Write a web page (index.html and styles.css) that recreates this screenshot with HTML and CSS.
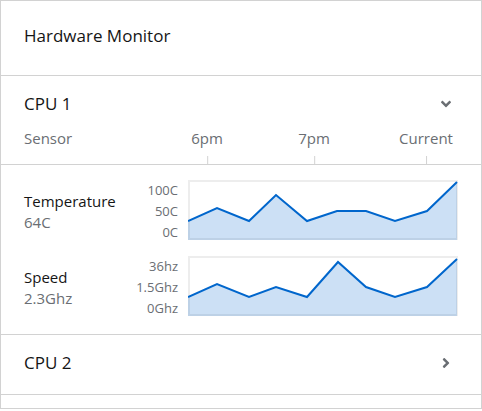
FILE: index.html
```html
<!DOCTYPE html>
<html lang="en">
<head>
<meta charset="utf-8">
<title>Hardware Monitor</title>
<link rel="stylesheet" href="styles.css">
</head>
<body>
<div class="card">
  <div class="card-title">Hardware Monitor</div>
  <ul class="cpu-list">
    <li class="cpu">
      <div class="cpu-head">
        <span class="cpu-name">CPU 1</span>
        <span class="toggle">
          <svg width="10" height="16" viewBox="0 0 320 512"><path d="M143 352.3L7 216.3c-9.4-9.4-9.4-24.6 0-33.9l22.6-22.6c9.4-9.4 24.6-9.4 33.9 0l96.4 96.4 96.4-96.4c9.4-9.4 24.6-9.4 33.9 0l22.6 22.6c9.4 9.4 9.4 24.6 0 33.9l-136 136c-9.4 9.5-24.6 9.5-34 .1z"/></svg>
        </span>
      </div>
      <div class="axis-head">
        <span class="col-label">Sensor</span>
        <div class="time-axis">
          <span class="time" style="left:19px">6pm</span>
          <span class="time" style="left:126px">7pm</span>
          <span class="time" style="left:238px">Current</span>
        </div>
      </div>
      <div class="cpu-body">
        <div class="sensor-row">
          <div class="sensor">
            <div class="sensor-name">Temperature</div>
            <div class="sensor-value">64C</div>
          </div>
          <div class="y-axis"><span>100C</span><span>50C</span><span>0C</span></div>
          <svg class="spark" width="270" height="60" viewBox="0 0 270 60">
            <rect class="frame" x="1" y="1" width="268" height="58"/>
            <path class="area" d="M0,41 L29,28 61,41 88,15 119,41 149,31 178,31 207,41 239,31 269,2 L269,60 L0,60Z"/>
            <polyline class="line" points="0,41 29,28 61,41 88,15 119,41 149,31 178,31 207,41 239,31 269,2"/>
          </svg>
        </div>
        <div class="sensor-row">
          <div class="sensor">
            <div class="sensor-name">Speed</div>
            <div class="sensor-value">2.3Ghz</div>
          </div>
          <div class="y-axis"><span>36hz</span><span>1.5Ghz</span><span>0Ghz</span></div>
          <svg class="spark" width="270" height="60" viewBox="0 0 270 60">
            <rect class="frame" x="1" y="1" width="268" height="58"/>
            <path class="area" d="M0,41 L29,28 61,41 88,31 119,41 150,6 178,31 207,41 239,31 269,3 L269,60 L0,60Z"/>
            <polyline class="line" points="0,41 29,28 61,41 88,31 119,41 150,6 178,31 207,41 239,31 269,3"/>
          </svg>
        </div>
      </div>
    </li>
    <li class="cpu">
      <div class="cpu-head collapsed">
        <span class="cpu-name">CPU 2</span>
        <span class="toggle">
          <svg width="8" height="16" viewBox="0 0 256 512"><path d="M224.3 273l-136 136c-9.4 9.4-24.6 9.4-33.9 0l-22.6-22.6c-9.4-9.4-9.4-24.6 0-33.9l96.4-96.4-96.4-96.4c-9.4-9.4-9.4-24.6 0-33.9L54.3 103c9.4-9.4 24.6-9.4 33.9 0l136 136c9.5 9.4 9.5 24.6.1 34z"/></svg>
        </span>
      </div>
    </li>
  </ul>
</div>
</body>
</html>
```

FILE: styles.css
```css
* { box-sizing: border-box; }

body {
  margin: 0;
  background: #fff;
  font-family: "Open Sans", "Noto Sans", sans-serif;
  color: #151515;
}

.card {
  width: 482px;
  border: 1px solid #d2d2d2;
  padding-bottom: 13px;
  background: #fff;
}

.card-title {
  padding: 22px 23px 26px;
  font-size: 17px;
  line-height: 26px;
  border-bottom: 1px solid #d2d2d2;
}

.cpu-list {
  list-style: none;
  margin: 0;
  padding: 0;
}

.cpu {
  border-bottom: 1px solid #d2d2d2;
}

.cpu-head {
  display: flex;
  align-items: center;
  justify-content: space-between;
  padding: 16px 23px 0;
}

.cpu-head.collapsed {
  padding-bottom: 19px;
}

.cpu-name {
  font-size: 17px;
  line-height: 24px;
}

.toggle {
  width: 24px;
  height: 24px;
  display: flex;
  align-items: center;
  justify-content: center;
}

.toggle svg {
  fill: #6a6e73;
}

.axis-head {
  display: flex;
  padding: 12px 23px 0;
  font-size: 15px;
  line-height: 21px;
  color: #6a6e73;
}

.col-label {
  flex: 1;
}

.time-axis {
  position: relative;
  width: 270px;
  height: 36px;
}

.time {
  position: absolute;
  top: 0;
  transform: translateX(-50%);
  white-space: nowrap;
}

.time::after {
  content: "";
  position: absolute;
  left: 50%;
  top: 28px;
  width: 1px;
  height: 8px;
  background: #d2d2d2;
}

.cpu-body {
  border-top: 1px solid #d2d2d2;
  padding: 15px 23px;
  display: flex;
  flex-direction: column;
  gap: 13px;
}

.sensor-row {
  display: flex;
  align-items: flex-start;
  height: 63px;
}

.sensor {
  flex: 1;
  align-self: center;
  font-size: 15px;
  line-height: 21px;
}

.sensor-value {
  color: #6a6e73;
}

.y-axis {
  display: flex;
  flex-direction: column;
  align-items: flex-end;
  margin-right: 10px;
  font-size: 13px;
  line-height: 21px;
  color: #6a6e73;
}

.spark {
  display: block;
  flex: none;
}

.frame {
  fill: none;
  stroke: #ededed;
  stroke-width: 2;
}

.area {
  fill: rgba(0, 102, 204, 0.2);
}

.line {
  fill: none;
  stroke: #06c;
  stroke-width: 2;
}
```
